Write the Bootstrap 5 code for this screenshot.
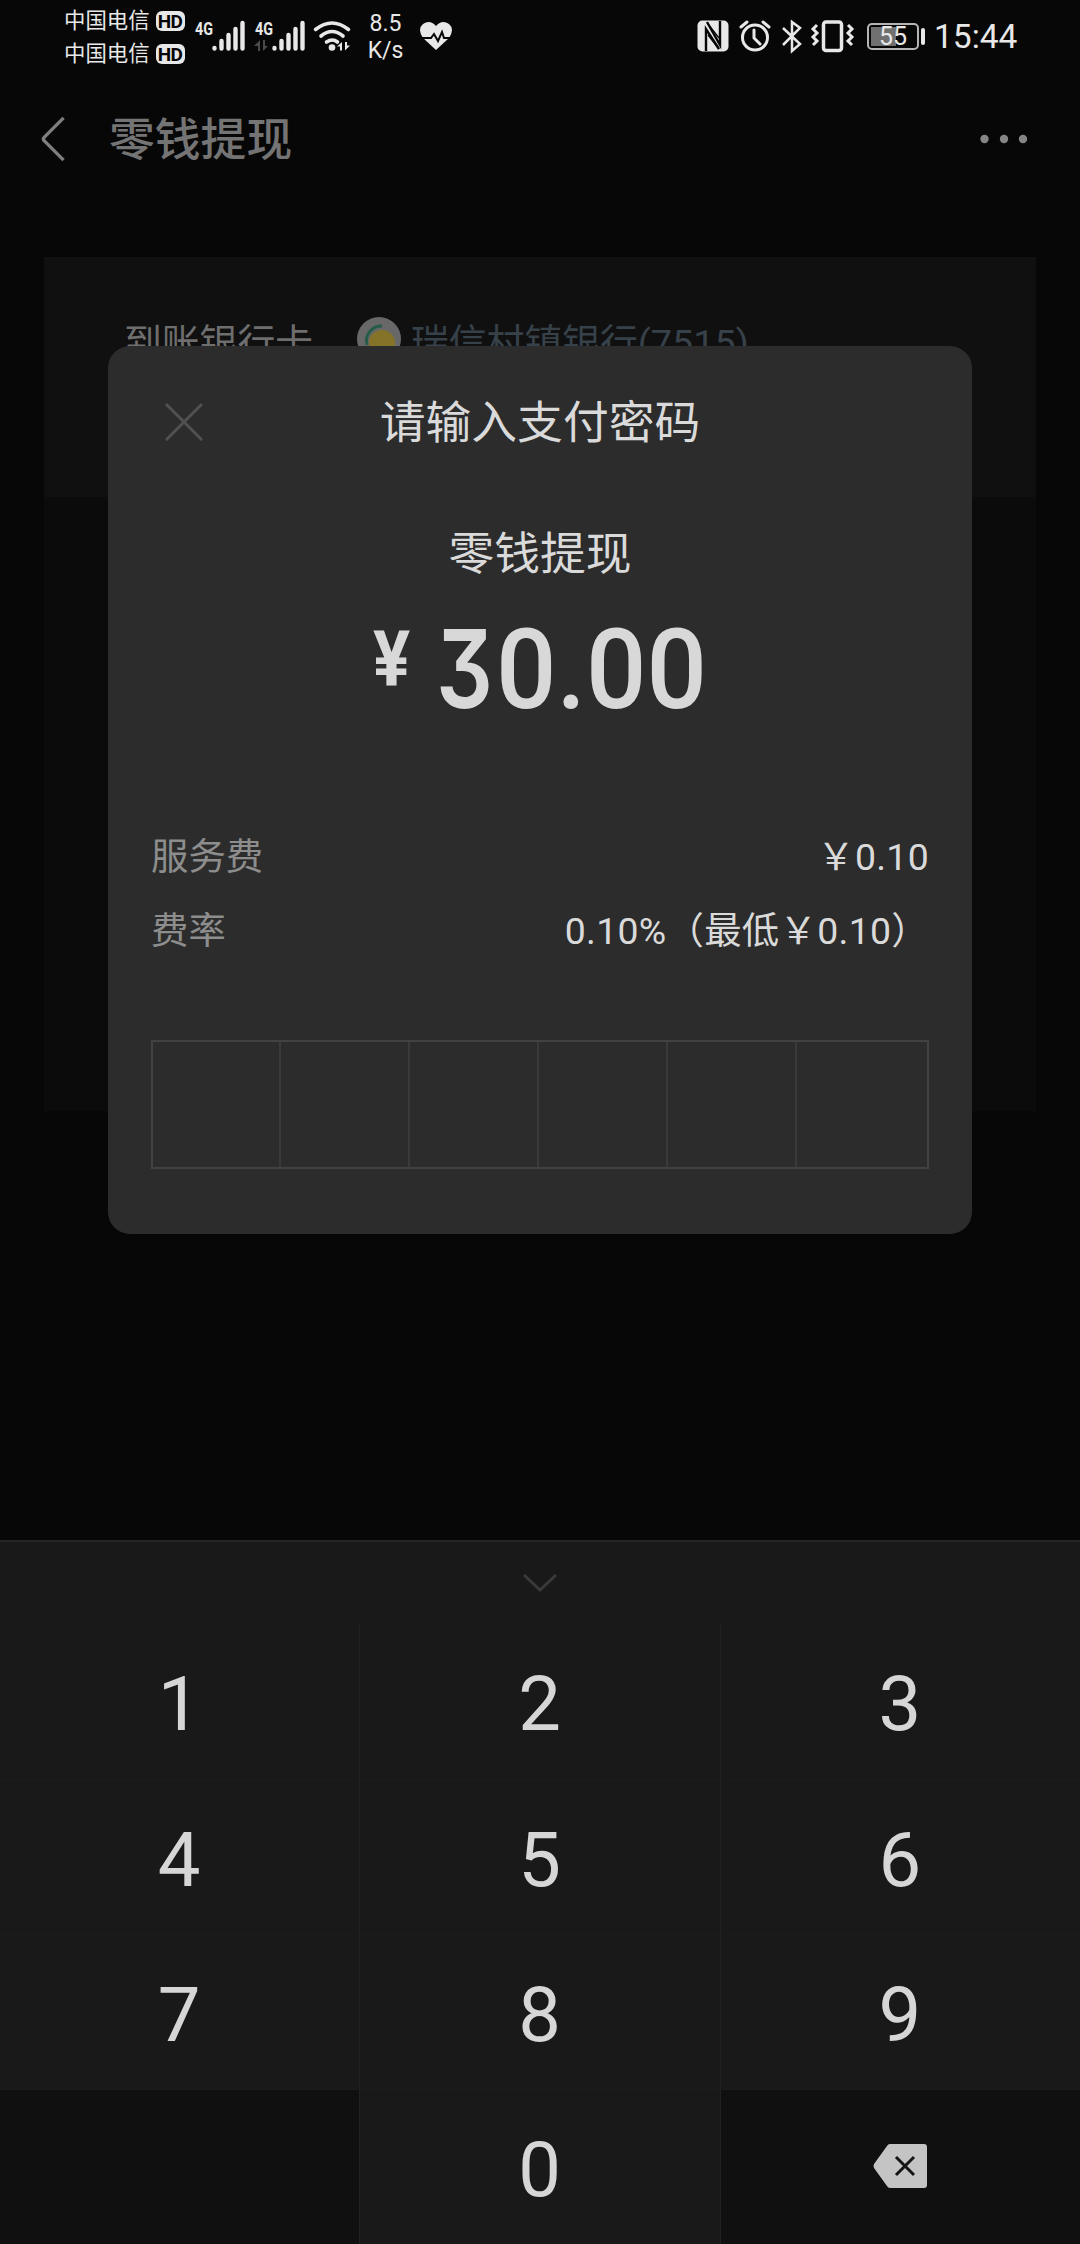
<!DOCTYPE html>
<html lang="zh-CN">
<head>
<meta charset="utf-8">
<meta name="viewport" content="width=device-width, initial-scale=1">
<title>零钱提现</title>
<link href="https://cdn.jsdelivr.net/npm/bootstrap@5.3.0/dist/css/bootstrap.min.css" rel="stylesheet">
<style>
body{background:#070707;color:#d8d8d8;font-family:Roboto,"Noto Sans CJK SC",sans-serif;height:2244px;overflow:hidden}
.screen{width:1080px;height:2244px}
svg{display:block;flex:none}
.statusbar{height:76px;color:#e8e8e8;padding:4px 64px 4px 64px}
.carrier{font-size:21.4px;line-height:33px;height:33px;gap:5px}
.hd-tag{width:29px;height:20px;border-radius:6px;background:#e8e8e8;color:#060606;font:700 19px/21px Roboto,sans-serif;text-align:center;letter-spacing:-.5px}
.carrier .hd-tag{margin-left:1px}
.signals{margin-left:8px}
.net-speed{font-size:23px;line-height:27px;width:36px;margin:6px 0 0 15px}
.heart{margin-left:15px}
.clock{font-size:33.5px;line-height:40px;width:82px;white-space:nowrap;margin-top:13px}
.topbar{height:126px;padding:0 52px 0 40px;color:#747474}
.topbar-title{font-size:45.8px;font-weight:500;line-height:60px;margin-left:43px;padding-top:4px}
.withdraw{margin:55px 44px 0;height:854px;background:#0b0b0b}
.bank-row{height:240px;background:#101010;padding:56px 0 0 80px;font-size:37.8px;line-height:61px;color:#6e6e6e}
.bank-logo{margin:4px 10px 0 44px}
.bank-name{color:#37414a}
.pay-dialog{left:108px;top:346px;width:864px;height:888px;border:0;border-radius:22px;background:#2c2c2c;color:#dadada;padding:48px 44px 0}
.dialog-title{font-size:45.8px;line-height:60px}
.close-x{left:13px;top:9px}
.pay-subject{font-size:45.8px;line-height:60px;margin-top:71px}
.amount{height:140px;margin-top:15px}
.flat-three{font-family:Inter,sans-serif;font-weight:600;font-feature-settings:'cv09'}
.fees{margin:80px -1px 0 -1px;font-size:37.4px}
.fees .fee-line{height:74px;line-height:74px}
.fee-val{letter-spacing:.3px}
.fee-key{color:#8d8d8d}
.pin{margin:72px -1px 0;height:129px;border:2px solid #424242}
.pin>div{flex:0 0 129px}
.pin>div:first-child{flex-basis:126px}
.pin>div:last-child{flex:1}
.pin>div+div{border-left:2px solid #3a3a3a}
.keypad{height:704px;background:#191919;border-top:2px solid #262626}
.fold{height:82px;padding-top:31px}
.key-row{height:155px}
.key-cell{font-size:76px;line-height:161px;height:155px;text-align:center;color:#d6d6d6;padding-right:1px}
.key-cell+.key-cell{border-left:1px solid #212121}
.key-row+.key-row .key-cell{border-top:1px solid #1c1c1c}
.key-row .key-dim{background:#101010}
.key-row .key-erase{padding-bottom:2px}
</style>
</head>
<body>
<div class="screen d-flex flex-column position-relative">
  <header class="statusbar d-flex justify-content-between">
    <div class="d-flex">
      <div>
        <div class="carrier d-flex align-items-center"><span>中国电信</span><span class="hd-tag">HD</span></div>
        <div class="carrier d-flex align-items-center"><span>中国电信</span><span class="hd-tag">HD</span></div>
      </div>
      <svg class="signals" width="160" height="64" viewBox="190 4 160 64" fill="#e8e8e8">
        <g font-family="Roboto" font-weight="700" font-size="19"><text x="192" y="34.500" textLength="18" lengthAdjust="spacingAndGlyphs">4G</text><text x="252" y="34.500" textLength="18" lengthAdjust="spacingAndGlyphs">4G</text></g>
        <g stroke="#e8e8e8" stroke-width="4.4" stroke-linecap="round"><path d="M211.500 48v.6M218.500 41v7.600M225.500 35v13.600M232.500 29v19.600M239.500 23v25.600M271.500 48v.6M278.500 41v7.600M285.500 35v13.600M292.500 29v19.600M299.500 23v25.600"/></g>
        <path fill="#4a4a4a" d="M257 40v11h-2v-5h-4zM260 40v11l5-5h-3v-6z"/>
        <g fill="none" stroke="#e8e8e8" stroke-width="3.600" stroke-linecap="round"><path d="M312.500 29.500q16.500-13 33 0M318 36q11-9 22 0M323.500 42q6-4 11 0"/></g>
        <circle cx="329" cy="47.500" r="3.300"/><path d="M339 42v8.500h-2v-4h-3zM342 42v8.500l5-5h-3v-3.500z"/>
      </svg>
      <div class="net-speed text-center"><div>8.5</div><div>K/s</div></div>
      <svg class="heart" width="34" height="64" viewBox="412 4 34 64"><path fill="#e8e8e8" d="M429 50L416 38q-6-9 0-14 7-5 13 2 6-7 13-2 6 5 0 14z"/><path d="M413 38h11l3-4 4 7 4-9 2 6h9" fill="none" stroke="#060606" stroke-width="2"/></svg>
    </div>
    <div class="d-flex">
      <svg width="238" height="64" viewBox="696 4 238 64" fill="none" stroke="#e8e8e8" stroke-width="3">
        <rect x="697.500" y="20.500" width="31" height="31" rx="5" fill="#e8e8e8" stroke="none"/>
        <path d="M706 51V29l13 20M720 21v24L707 22" stroke="#060606" stroke-width="2.400"/><path d="M708 35l11 14M708 24l11 14" stroke="#060606" stroke-width="1.300"/>
        <circle cx="755" cy="37.500" r="12.500"/><path d="M754 30v8l6 6M741 27l6-5M769 27l-6-5" stroke-linecap="round"/>
        <path d="M783 28l17 16-8 7V22l8 6-17 17" stroke-width="2.500"/>
        <rect x="823.500" y="22" width="18" height="28.500" rx="2.500" stroke-width="3.500"/><path d="M817 25l-4 4 4 4-4 4 4 4-4 4M848 25l4 4-4 4 4 4-4 4 4 4" stroke-width="3"/>
        <rect x="868" y="24" width="50" height="25" rx="4" stroke="#b5b5b5" stroke-width="2"/><path fill="#707070" stroke="none" d="M871 27h25v19h-25z"/><path d="M923 30v13" stroke-width="4" stroke-linecap="round"/>
        <text x="879" y="45" font-family="Roboto" font-size="25" fill="#e8e8e8" stroke="none">55</text>
      </svg>
      <div class="clock">15:44</div>
    </div>
  </header>
  <nav class="topbar d-flex align-items-center">
    <svg width="26" height="48" viewBox="0 0 26 50" fill="none" stroke="#7e7e7e" stroke-width="3.500"><path d="M24 3L4 23q-2 2 0 4l20 20"/></svg>
    <span class="topbar-title flex-grow-1">零钱提现</span>
    <svg width="48" height="10" viewBox="0 0 48 10" fill="#858585"><circle cx="4.500" cy="5" r="4.200"/><circle cx="24" cy="5" r="4.200"/><circle cx="43" cy="5" r="4.200"/></svg>
  </nav>
  <main class="withdraw">
    <div class="bank-row d-flex align-items-start">
      <span>到账银行卡</span>
      <svg class="bank-logo" width="44" height="44" viewBox="0 0 44 44"><circle cx="22" cy="22" r="22" fill="#686868"/><circle cx="25" cy="26" r="13" fill="#857428"/><path d="M25 9A15 15 0 0 0 10 28" fill="none" stroke="#245c48" stroke-width="3"/></svg>
      <span class="bank-name">瑞信村镇银行(7515)</span>
    </div>
  </main>
  <section class="keypad mt-auto">
    <div class="fold d-flex justify-content-center align-items-start"><svg width="36" height="20" viewBox="0 0 36 20" fill="none" stroke="#3a3a3a" stroke-width="3"><path d="M2 2l16 15L34 2"/></svg></div>
    <div class="keys">
      <div class="row g-0 key-row"><div class="col key-cell">1</div><div class="col key-cell">2</div><div class="col key-cell">3</div></div>
      <div class="row g-0 key-row"><div class="col key-cell">4</div><div class="col key-cell">5</div><div class="col key-cell">6</div></div>
      <div class="row g-0 key-row"><div class="col key-cell">7</div><div class="col key-cell">8</div><div class="col key-cell">9</div></div>
      <div class="row g-0 key-row"><div class="col key-cell key-dim"></div><div class="col key-cell">0</div><div class="col key-cell key-dim key-erase d-flex justify-content-center align-items-center"><svg width="54" height="44" viewBox="0 0 54 44"><path fill="#c4c4c4" d="M17 0h34q3 0 3 3v38q0 3-3 3H17q-2 0-3-2L1 24q-1-2 0-4L14 2q1-2 3-2z"/><path d="M23 13l18 18M41 13L23 31" stroke="#151515" stroke-width="3"/></svg></div></div>
    </div>
  </section>
  <div class="pay-dialog card position-absolute">
    <div class="d-flex align-items-center position-relative justify-content-center dialog-title">
      <svg class="close-x position-absolute" width="38" height="38" viewBox="0 0 38 38" stroke="#505050" stroke-width="3"><path d="M1 1l36 36M37 1L1 37"/></svg>
      <span>请输入支付密码</span>
    </div>
    <div class="pay-subject text-center">零钱提现</div>
    <div class="amount">
      <svg width="776" height="140" viewBox="152 600 776 140" fill="#d8d8d8" font-family="Roboto" font-weight="500"><text font-size="77" font-weight="700" transform="translate(373 686) scale(.9 1)">¥</text><text class="flat-three" font-size="109" transform="translate(436 708) scale(.82 1)">3</text><text x="496" y="708" font-size="111" textLength="211" lengthAdjust="spacingAndGlyphs">0.00</text></svg>
    </div>
    <div class="fees">
      <div class="d-flex justify-content-between fee-line"><span class="fee-key">服务费</span><span class="fee-val">￥0.10</span></div>
      <div class="d-flex justify-content-between fee-line"><span class="fee-key">费率</span><span class="fee-val">0.10%（最低￥0.10）</span></div>
    </div>
    <div class="pin d-flex"><div></div><div></div><div></div><div></div><div></div><div></div></div>
  </div>
</div>
<script src="https://cdn.jsdelivr.net/npm/bootstrap@5.3.0/dist/js/bootstrap.bundle.min.js"></script>
</body>
</html>
